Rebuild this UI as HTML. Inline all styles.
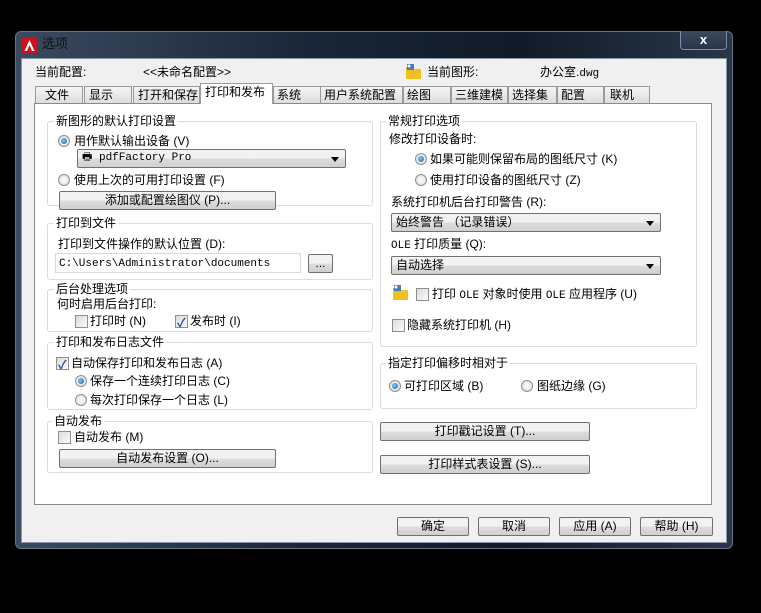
<!DOCTYPE html>
<html><head><meta charset="utf-8"><style>
*{box-sizing:border-box;margin:0;padding:0}
body{width:761px;height:613px;background:#000;position:relative;overflow:hidden;font-family:"Liberation Sans","Noto Sans CJK SC","WenQuanYi Zen Hei",sans-serif;font-size:12px;color:#000}
.a{position:absolute;white-space:nowrap;line-height:14px}
.frame{position:absolute;left:15px;top:31px;width:718px;height:518px;background:linear-gradient(90deg,#3a4a60,#1b2738 40%,#101a28 70%,#2a3648);border:1px solid #6a7688;border-radius:6px}
.client{position:absolute;left:21px;top:58px;width:706px;height:485px;background:#f0f0f0;border:1px solid #8a96a6}
.panel{position:absolute;left:34px;top:103px;width:678px;height:402px;background:#fff;border:1px solid #8a8a8a}
.tab{position:absolute;top:86px;height:18px;background:linear-gradient(#f4f4f4,#dcdcdc);border:1px solid #9a9a9a;border-bottom:none;padding-left:6px;line-height:17px;font-size:12px;overflow:hidden;white-space:nowrap}
.tab.sel{top:83px;height:21px;background:#fff;z-index:2;padding-left:4px}
.grp{position:absolute;border:1px solid #d8dde2;border-radius:3px}
.lg{position:absolute;background:#fff;padding:0 2px;line-height:14px;font-size:12px}
.btn{position:absolute;height:19px;border:1px solid #707070;border-radius:2px;background:linear-gradient(#f2f2f2 50%,#dddddd 51%,#cfcfcf);text-align:center;line-height:17px;font-size:12px}
.cb{position:absolute;width:13px;height:13px;border:1px solid #8e8f8f;background:linear-gradient(135deg,#dcdcdc,#fafafa)}
.cb.on::after{content:"✓";position:absolute;left:1px;top:-2px;color:#2a4fa0;font-size:12px;font-weight:bold}
.rd{position:absolute;width:12px;height:12px;border-radius:50%;border:1px solid #8e8f8f;background:radial-gradient(#fff,#d8d8d8)}
.rd.on::after{content:"";position:absolute;left:2px;top:2px;width:6px;height:6px;border-radius:50%;background:radial-gradient(circle at 40% 40%,#7fc8f0,#1a5ea8)}
.dd{position:absolute;height:19px;border:1px solid #707070;border-radius:2px;background:linear-gradient(#f2f2f2 50%,#dcdcdc 51%,#d0d0d0);line-height:17px;padding-left:4px}
.dd::after{content:"";position:absolute;right:6px;top:7px;border:4px solid transparent;border-top:5px solid #000}
.mono{font-family:"Liberation Mono",monospace;font-size:11px}
.folder{position:absolute;width:17px;height:17px}
</style></head><body>
<div class="frame"></div>
<div class="a" style="left:22px;top:38px;width:15px;height:15px;background:#c8141c"><svg width="15" height="15"><path d="M7.5 2L2.5 13h2.5l2.5-6 2.5 6h2.5z" fill="#fff"/></svg></div>
<div class="a" style="left:42px;top:37px;color:#111;font-size:13px">选项</div>
<div class="a" style="left:680px;top:31px;width:47px;height:19px;border:1px solid #8090a4;border-top:none;border-radius:0 0 4px 4px;background:linear-gradient(#3c4a60,#28344a);color:#fff;text-align:center;font-weight:bold;font-size:13px;line-height:17px">x</div>
<div class="client"></div>
<div class="a" style="left:35px;top:65px">当前配置:</div>
<div class="a" style="left:143px;top:65px">&lt;&lt;未命名配置&gt;&gt;</div>
<svg class="folder" style="left:405px;top:63px" viewBox="0 0 17 17"><path d="M1 6h15v10H1z" fill="#f0c020"/><path d="M1 4h6l2 2H1z" fill="#e0b010"/><path d="M2 1h7v6H2z" fill="#4a7ab8"/><circle cx="4" cy="3" r="1.5" fill="#fff"/></svg>
<div class="a" style="left:427px;top:65px">当前图形:</div>
<div class="a" style="left:540px;top:65px">办公室.<span class="mono">dwg</span></div>

<div class="tab" style="left:35px;width:48px;padding-left:9px">文件</div>
<div class="tab" style="left:84px;width:48px;padding-left:4px">显示</div>
<div class="tab" style="left:133px;width:67px;padding-left:4px">打开和保存</div>
<div class="tab sel" style="left:200px;width:73px">打印和发布</div>
<div class="tab" style="left:273px;width:48px;padding-left:3px">系统</div>
<div class="tab" style="left:320px;width:83px;padding-left:3px">用户系统配置</div>
<div class="tab" style="left:403px;width:48px;padding-left:3px">绘图</div>
<div class="tab" style="left:451px;width:57px;padding-left:3px">三维建模</div>
<div class="tab" style="left:508px;width:49px;padding-left:3px">选择集</div>
<div class="tab" style="left:557px;width:47px;padding-left:3px">配置</div>
<div class="tab" style="left:604px;width:46px;padding-left:5px">联机</div>
<div class="panel"></div>

<div class="grp" style="left:47px;top:121px;width:326px;height:85px"></div>
<div class="lg" style="left:54px;top:114px">新图形的默认打印设置</div>
<div class="rd on" style="left:58px;top:135px"></div><div class="a" style="left:74px;top:134px">用作默认输出设备 (V)</div>
<div class="dd mono" style="left:77px;top:149px;width:269px">🖶 pdfFactory Pro</div>
<div class="rd" style="left:58px;top:174px"></div><div class="a" style="left:74px;top:173px">使用上次的可用打印设置 (F)</div>
<div class="btn" style="left:59px;top:191px;width:217px">添加或配置绘图仪 (P)...</div>

<div class="grp" style="left:47px;top:223px;width:326px;height:57px"></div>
<div class="lg" style="left:54px;top:216px">打印到文件</div>
<div class="a" style="left:58px;top:237px">打印到文件操作的默认位置 (D):</div>
<div class="a mono" style="left:55px;top:253px;width:246px;height:20px;border:1px solid #d8d8d8;padding:3px 0 0 3px">C:\Users\Administrator\documents</div>
<div class="btn" style="left:308px;top:254px;width:25px">...</div>

<div class="grp" style="left:47px;top:289px;width:326px;height:43px"></div>
<div class="lg" style="left:54px;top:282px">后台处理选项</div>
<div class="a" style="left:57px;top:297px">何时启用后台打印:</div>
<div class="cb" style="left:75px;top:315px"></div><div class="a" style="left:90px;top:314px">打印时 (N)</div>
<div class="cb on" style="left:175px;top:315px"></div><div class="a" style="left:190px;top:314px">发布时 (I)</div>

<div class="grp" style="left:47px;top:342px;width:326px;height:68px"></div>
<div class="lg" style="left:54px;top:335px">打印和发布日志文件</div>
<div class="cb on" style="left:56px;top:357px"></div><div class="a" style="left:71px;top:356px">自动保存打印和发布日志 (A)</div>
<div class="rd on" style="left:75px;top:375px"></div><div class="a" style="left:90px;top:374px">保存一个连续打印日志 (C)</div>
<div class="rd" style="left:75px;top:394px"></div><div class="a" style="left:90px;top:393px">每次打印保存一个日志 (L)</div>

<div class="grp" style="left:47px;top:421px;width:326px;height:52px"></div>
<div class="lg" style="left:52px;top:414px">自动发布</div>
<div class="cb" style="left:58px;top:431px"></div><div class="a" style="left:74px;top:430px">自动发布 (M)</div>
<div class="btn" style="left:59px;top:449px;width:217px">自动发布设置 (O)...</div>

<div class="grp" style="left:380px;top:121px;width:317px;height:226px"></div>
<div class="lg" style="left:386px;top:114px">常规打印选项</div>
<div class="a" style="left:389px;top:132px">修改打印设备时:</div>
<div class="rd on" style="left:415px;top:153px"></div><div class="a" style="left:430px;top:152px">如果可能则保留布局的图纸尺寸 (K)</div>
<div class="rd" style="left:415px;top:174px"></div><div class="a" style="left:430px;top:173px">使用打印设备的图纸尺寸 (Z)</div>
<div class="a" style="left:391px;top:195px">系统打印机后台打印警告 (R):</div>
<div class="dd" style="left:391px;top:213px;width:270px">始终警告 （记录错误）</div>
<div class="a" style="left:391px;top:237px"><span class="mono">OLE</span> 打印质量 (Q):</div>
<div class="dd" style="left:391px;top:256px;width:270px">自动选择</div>
<svg class="folder" style="left:392px;top:284px" viewBox="0 0 17 17"><path d="M1 6h15v10H1z" fill="#f0c020"/><path d="M1 4h6l2 2H1z" fill="#e0b010"/><path d="M2 1h7v6H2z" fill="#4a7ab8"/><circle cx="4" cy="3" r="1.5" fill="#fff"/></svg>
<div class="cb" style="left:416px;top:288px"></div><div class="a" style="left:432px;top:287px">打印 <span class="mono">OLE</span> 对象时使用 <span class="mono">OLE</span> 应用程序 (U)</div>
<div class="cb" style="left:392px;top:319px"></div><div class="a" style="left:407px;top:318px">隐藏系统打印机 (H)</div>

<div class="grp" style="left:380px;top:363px;width:317px;height:46px"></div>
<div class="lg" style="left:386px;top:356px">指定打印偏移时相对于</div>
<div class="rd on" style="left:389px;top:380px"></div><div class="a" style="left:404px;top:379px">可打印区域 (B)</div>
<div class="rd" style="left:521px;top:380px"></div><div class="a" style="left:537px;top:379px">图纸边缘 (G)</div>

<div class="btn" style="left:380px;top:422px;width:210px">打印戳记设置 (T)...</div>
<div class="btn" style="left:380px;top:455px;width:210px">打印样式表设置 (S)...</div>

<div class="btn" style="left:397px;top:517px;width:72px">确定</div>
<div class="btn" style="left:478px;top:517px;width:72px">取消</div>
<div class="btn" style="left:559px;top:517px;width:72px">应用 (A)</div>
<div class="btn" style="left:640px;top:517px;width:73px">帮助 (H)</div>
</body></html>
